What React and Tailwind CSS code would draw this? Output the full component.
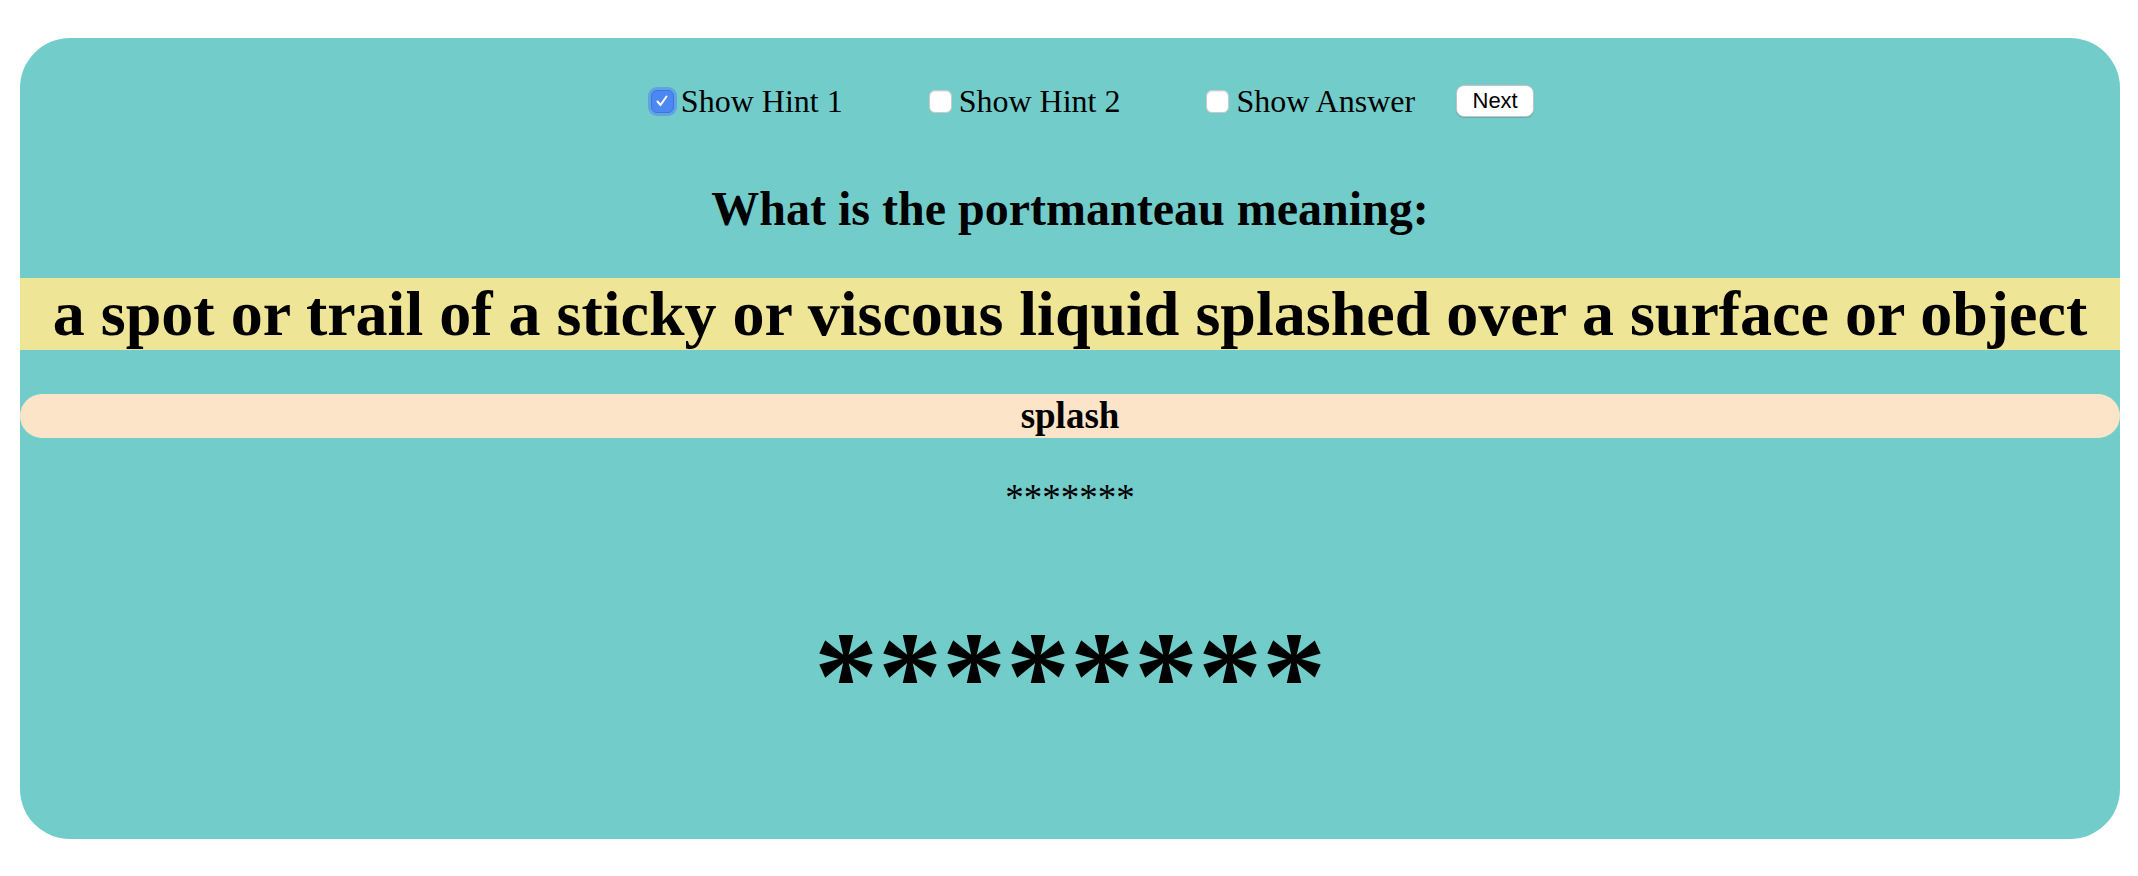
import React, { useState } from 'react';

const serif = { fontFamily: '"Liberation Serif", "Times New Roman", serif' };

const Box = ({ checked, onClick }) => (
  <span
    onClick={onClick}
    className={`flex h-[23px] w-[23px] shrink-0 items-center justify-center rounded-[6px] cursor-pointer ${
      checked
        ? 'bg-[#4d88f2] border border-[#3e74dc] ring-[3px] ring-[#5a90ee]/70'
        : 'bg-white border border-[#c9c9c9] shadow-[inset_0_1px_1px_rgba(0,0,0,0.08)]'
    }`}
  >
    {checked && (
      <svg width="14" height="14" viewBox="0 0 14 14" fill="none">
        <polyline points="2.5,7.5 5.5,11 11.5,2.5" stroke="white" strokeWidth="2" strokeLinecap="round" strokeLinejoin="round" />
      </svg>
    )}
  </span>
);

const Option = ({ label, checked, onToggle, className }) => (
  <label className={`flex items-center gap-[7px] ${className || ''}`}>
    <Box checked={checked} onClick={onToggle} />
    <span className="text-[32px] leading-[36px] text-black">{label}</span>
  </label>
);

export default function App() {
  const [hint1, setHint1] = useState(true);
  const [hint2, setHint2] = useState(false);
  const [answer, setAnswer] = useState(false);

  return (
    <div className="min-h-screen bg-white pt-[38px] pl-[20px] pr-[18px]" style={serif}>
      <div className="h-[801px] rounded-[50px] bg-[#72cdca] pt-[45px] text-black">
        {/* controls */}
        <div className="flex h-[36px] items-center justify-center pl-[45px]">
          <Option label="Show Hint 1" checked={hint1} onToggle={() => setHint1(!hint1)} />
          <Option label="Show Hint 2" checked={hint2} onToggle={() => setHint2(!hint2)} className="ml-[86px]" />
          <Option label="Show Answer" checked={answer} onToggle={() => setAnswer(!answer)} className="ml-[86px]" />
          <button
            className="ml-[41px] h-[32px] w-[78px] rounded-[8px] border border-[#c4c4c4] bg-white text-[22px] leading-none text-black shadow-[0_1px_1px_rgba(0,0,0,0.15)]"
            style={{ fontFamily: '"Liberation Sans", Arial, sans-serif' }}
          >
            Next
          </button>
        </div>

        <h2 className="mt-[62px] text-center text-[48px] font-bold leading-[55px]">
          What is the portmanteau meaning:
        </h2>

        <h1 className="mt-[42px] bg-[#efe596] text-center text-[64px] font-bold leading-[72px] whitespace-nowrap">
          a spot or trail of a sticky or viscous liquid splashed over a surface or object
        </h1>

        <h3 className="mt-[44px] rounded-[22px] bg-[#fbe4c8] text-center text-[37px] font-bold leading-[44px]">
          splash
        </h3>

        <p className="mt-[38px] text-center text-[37px] leading-[43px]">*******</p>

        <p className="mt-[84px] text-center text-[128px] font-bold leading-[147px]">********</p>
      </div>
    </div>
  );
}
